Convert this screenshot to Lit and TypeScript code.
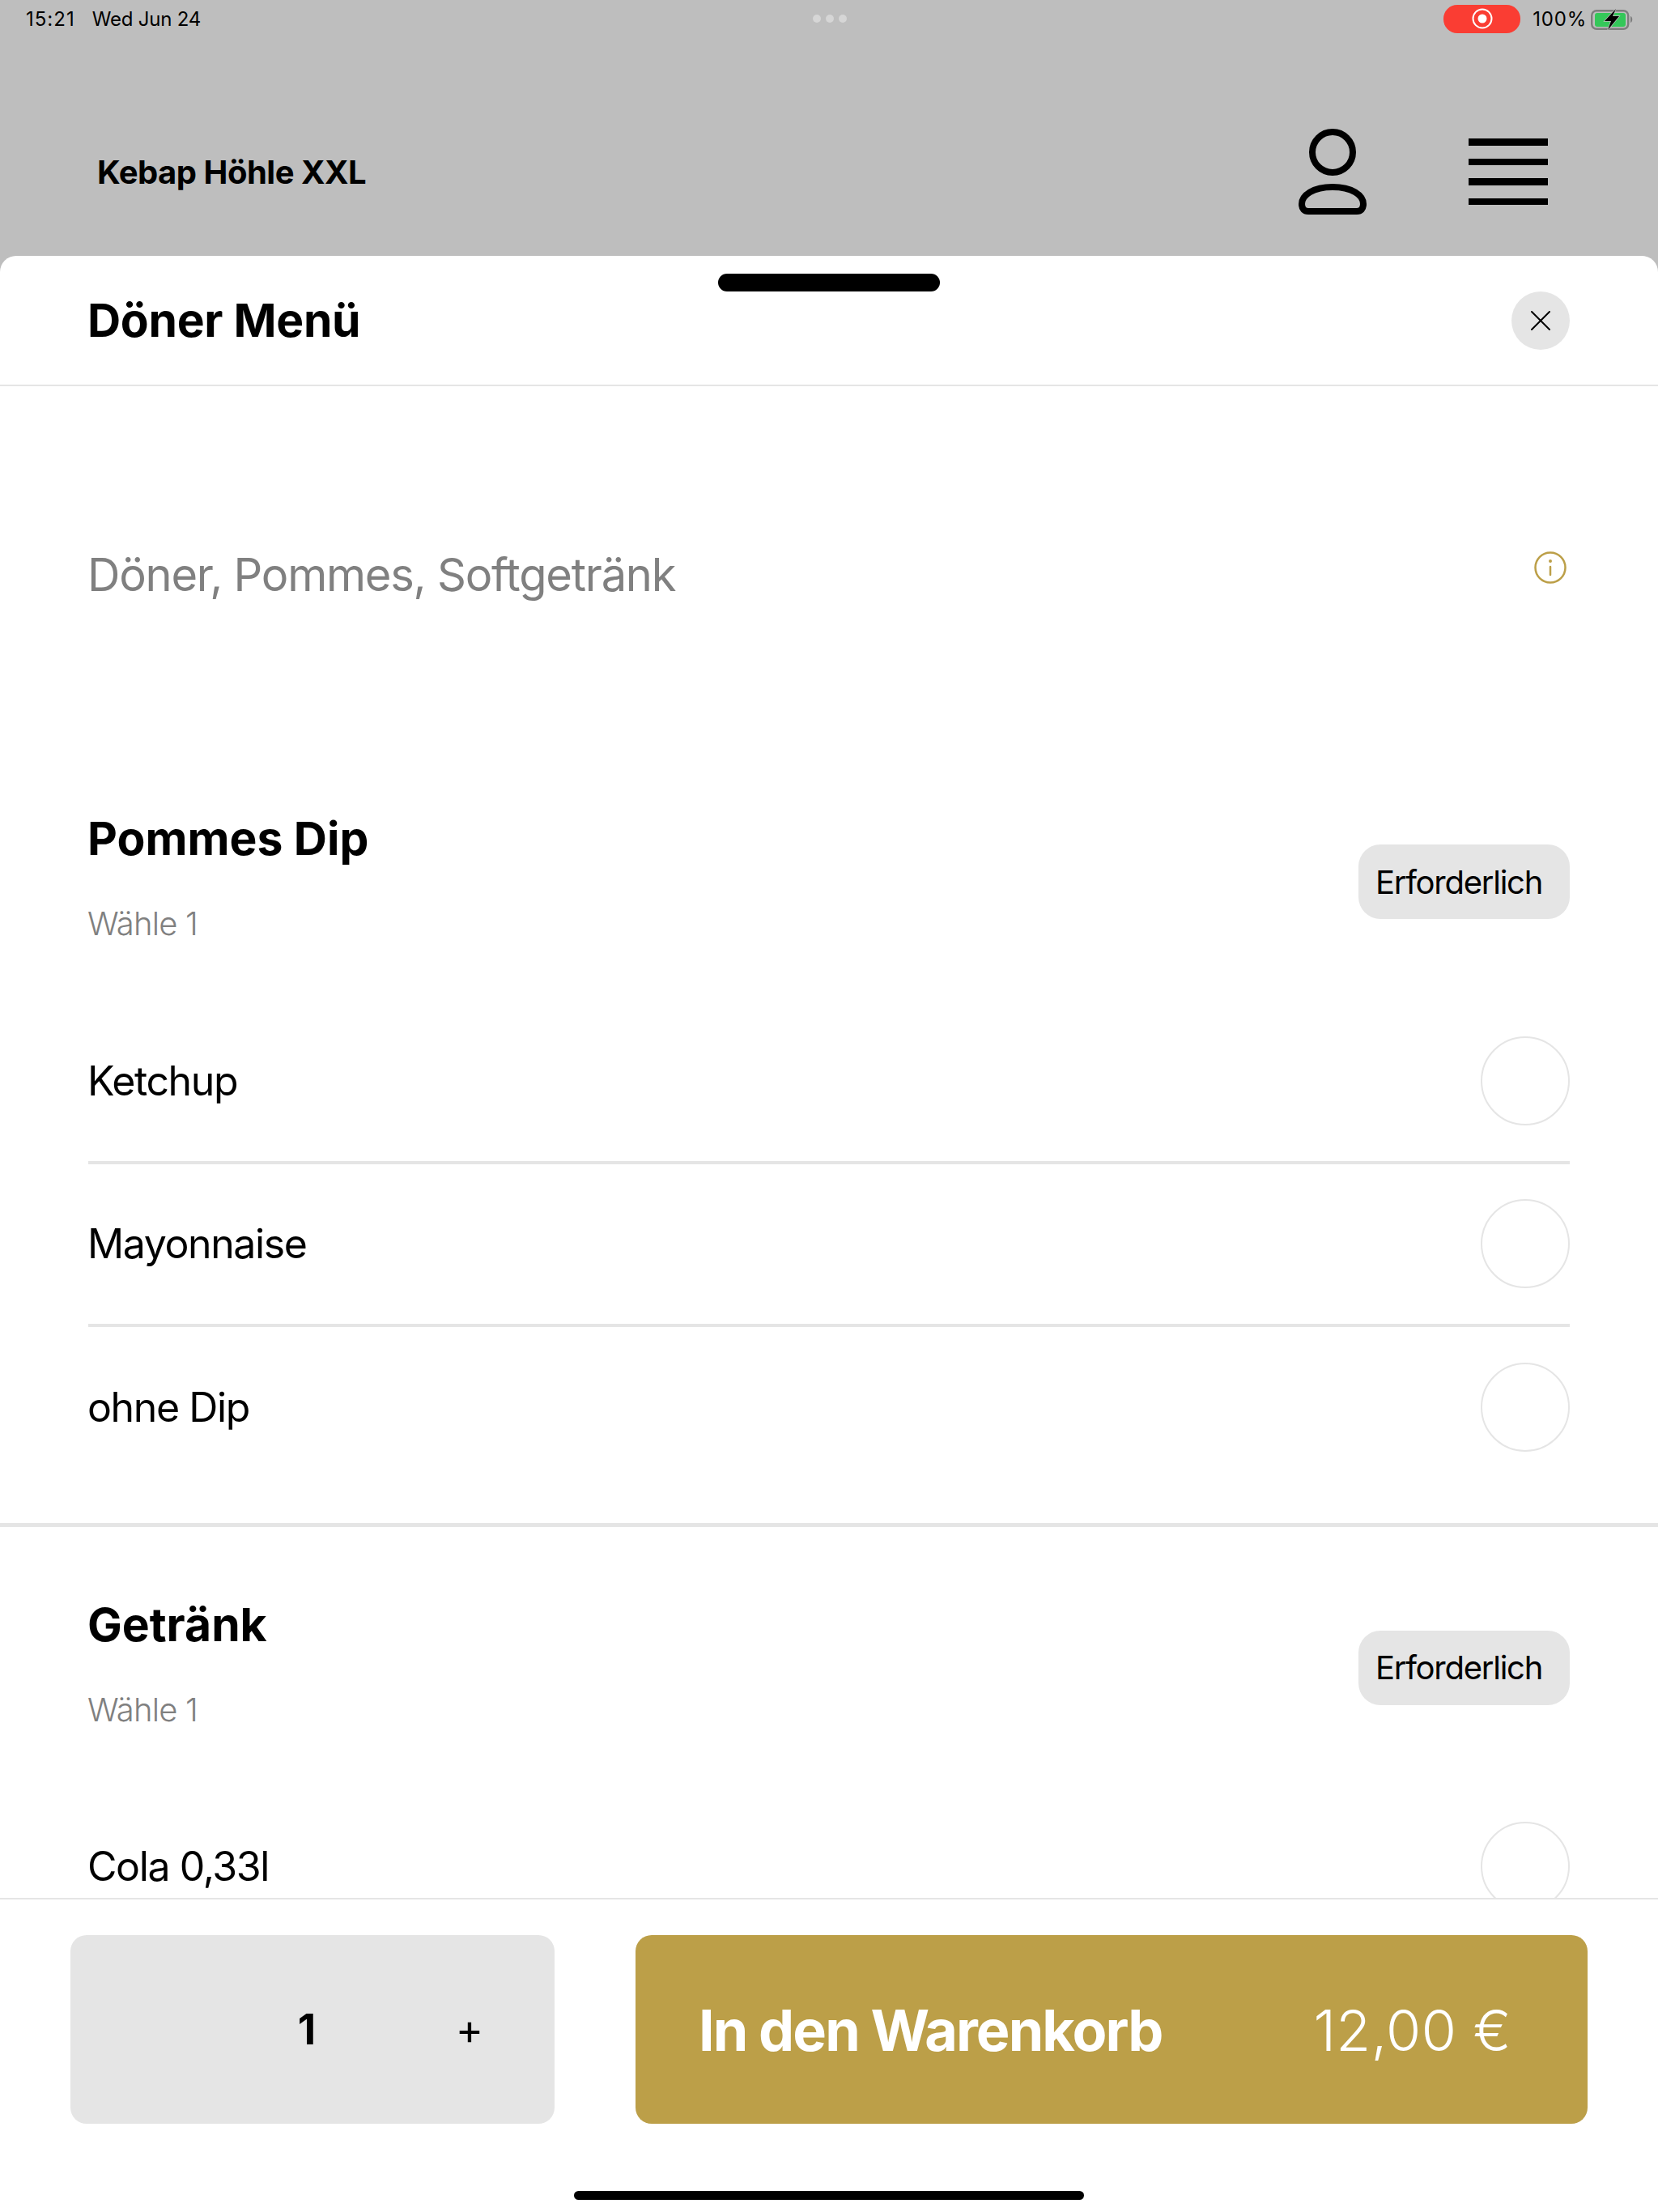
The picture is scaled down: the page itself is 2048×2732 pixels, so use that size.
import { LitElement, html, css, svg } from "lit";
import { customElement, property, state } from "lit/decorators.js";

interface Group {
  title: string;
  hint: string;
  options: string[];
}

const GROUPS: Group[] = [
  { title: "Pommes Dip", hint: "Wähle 1", options: ["Ketchup", "Mayonnaise", "ohne Dip"] },
  { title: "Getränk", hint: "Wähle 1", options: ["Cola 0,33l"] },
];

const personIcon = svg`<circle cx="42" cy="29" r="25" fill="none" stroke="#000" stroke-width="8"/>
  <path d="M42 72C66 72 80 82 80 93C80 99 77 102 72 102H12C7 102 4 99 4 93C4 82 18 72 42 72Z" fill="none" stroke="#000" stroke-width="8"/>`;

const boltIcon = svg`<path d="M31 6L17 21H25L21 32L35 15H27Z" fill="#000" stroke="#bebebe" stroke-width="1.5" paint-order="stroke"/>`;

@customElement("option-group")
export class OptionGroup extends LitElement {
  @property({ type: Object }) group!: Group;

  static styles = css`
    :host {
      display: block;
      padding: 0 109px 44px;
      border-bottom: 5px solid #e5e5e5;
    }
    .head {
      display: flex;
      justify-content: space-between;
      align-items: flex-start;
      box-sizing: border-box;
      height: 321px;
      padding-top: 88px;
    }
    h2 {
      margin: -1px 0 1px -1px;
      font-size: 57px;
      line-height: 68px;
      font-weight: 700;
      letter-spacing: 0;
      color: #000;
    }
    .hint {
      margin: 47px 0 0 -1px;
      font-size: 40px;
      line-height: 48px;
      font-weight: 300;
      letter-spacing: -0.8px;
      color: #808080;
    }
    .pill {
      display: flex;
      align-items: center;
      box-sizing: border-box;
      width: 261px;
      height: 92px;
      margin-top: 40px;
      padding-left: 21px;
      border-radius: 27px;
      background: #e5e5e5;
      font-size: 40px;
      letter-spacing: -1.25px;
      color: #000;
    }
    .row {
      display: flex;
      justify-content: space-between;
      align-items: center;
      height: 197.5px;
      border-bottom: 4.5px solid #e5e5e5;
      font-size: 50px;
      letter-spacing: -1.4px;
      color: #000;
    }
    .row:last-child {
      border-bottom: none;
    }
    .row span:first-child {
      margin-left: -1px;
    }
    .radio {
      box-sizing: border-box;
      width: 110px;
      height: 110px;
      border: 2px solid #e5e5e5;
      border-radius: 50%;
    }
  `;

  render() {
    return html`
      <div class="head">
        <div>
          <h2>${this.group.title}</h2>
          <div class="hint">${this.group.hint}</div>
        </div>
        <div class="pill">Erforderlich</div>
      </div>
      ${this.group.options.map(
        (name) => html`<div class="row">
          <span>${name}</span>
          <span class="radio"></span>
        </div>`,
      )}
    `;
  }
}

@customElement("app-root")
export class AppRoot extends LitElement {
  @state() protected quantity = 1;

  static styles = css`
    :host {
      display: flex;
      flex-direction: column;
      position: relative;
      width: 2048px;
      height: 2732px;
      overflow: hidden;
      background: #bebebe;
      font-family: Inter, "Liberation Sans", sans-serif;
      color: #000;
    }

    .status {
      display: flex;
      align-items: center;
      justify-content: space-between;
      height: 46px;
      padding: 0 30px 0 32px;
      font-size: 24px;
      letter-spacing: -0.2px;
    }
    .status-left {
      display: flex;
      gap: 21px;
      width: 400px;
    }
    .time {
      letter-spacing: 1px;
    }
    .dots {
      display: flex;
      gap: 6px;
    }
    .dots i {
      width: 10px;
      height: 10px;
      border-radius: 50%;
      background: #d6d6d6;
    }
    .status-right {
      display: flex;
      align-items: center;
      justify-content: flex-end;
      width: 400px;
    }
    .rec {
      display: flex;
      align-items: center;
      justify-content: center;
      width: 95px;
      height: 35px;
      margin-right: 15px;
      border-radius: 17px;
      background: #fa3d33;
    }
    .charge {
      letter-spacing: 0.8px;
    }
    .battery {
      margin-left: 5px;
    }

    .topbar {
      display: flex;
      align-items: center;
      height: 270px;
      padding: 62px 136px 0 120px;
      box-sizing: border-box;
    }
    .brand {
      flex: 1;
      font-size: 40px;
      font-weight: 700;
      letter-spacing: -0.5px;
    }
    .person {
      display: block;
      margin-right: 126px;
    }
    .burger {
      display: flex;
      flex-direction: column;
      gap: 16px;
      width: 98px;
    }
    .burger i {
      height: 8.5px;
      background: #000;
    }

    .sheet {
      flex: 1;
      display: flex;
      flex-direction: column;
      min-height: 0;
      border-radius: 20px 20px 0 0;
      background: #fff;
    }
    .grabber {
      position: absolute;
      left: 887px;
      top: 338px;
      width: 274px;
      height: 22px;
      border-radius: 11px;
      background: #000;
    }
    .sheet-head {
      display: flex;
      align-items: center;
      justify-content: space-between;
      height: 159px;
      padding: 0 109px;
      border-bottom: 2px solid #e5e5e5;
    }
    h1 {
      margin: -1px 0 0 -1px;
      font-size: 57px;
      font-weight: 700;
      letter-spacing: -0.3px;
    }
    .close {
      display: flex;
      align-items: center;
      justify-content: center;
      width: 72px;
      height: 72px;
      border-radius: 50%;
      background: #e5e5e5;
    }

    .scroll {
      flex: 1;
      min-height: 0;
      overflow: hidden;
    }
    .intro {
      display: flex;
      justify-content: space-between;
      align-items: center;
      box-sizing: border-box;
      height: 438px;
      padding: 28px 113px 0 108px;
      font-size: 56px;
      font-weight: 400;
      letter-spacing: -1.23px;
      color: #808080;
    }
    .intro svg {
      margin-top: -18px;
    }

    .footer {
      display: flex;
      justify-content: space-between;
      height: 388px;
      padding: 44px 87px 0;
      box-sizing: border-box;
      border-top: 2px solid #e5e5e5;
    }
    .qty {
      display: grid;
      grid-template-columns: 200px 184px 1fr;
      align-items: center;
      justify-items: center;
      width: 598px;
      height: 233px;
      border-radius: 20px;
      background: #e5e5e5;
    }
    .qty b {
      grid-column: 2;
      font-size: 52px;
      font-weight: 700;
    }
    .plus {
      grid-column: 3;
      width: 100%;
      padding-left: 4px;
      box-sizing: border-box;
      text-align: center;
      font-size: 52px;
      font-weight: 400;
    }
    .add {
      display: flex;
      align-items: center;
      justify-content: space-between;
      width: 1176px;
      height: 233px;
      padding: 2px 94px 0 78px;
      box-sizing: border-box;
      border-radius: 20px;
      background: #bc9f48;
      color: #fff;
      font-size: 70px;
    }
    .add b {
      font-weight: 700;
      letter-spacing: -1.9px;
    }
    .add span {
      font-weight: 300;
      letter-spacing: 0.4px;
    }
    .home {
      position: absolute;
      left: 709px;
      top: 2706px;
      width: 630px;
      height: 11px;
      border-radius: 6px;
      background: #000;
    }
  `;

  render() {
    return html`
      <div class="status">
        <div class="status-left"><span class="time">15:21</span><span>Wed Jun 24</span></div>
        <div class="dots"><i></i><i></i><i></i></div>
        <div class="status-right">
          <div class="rec">
            <svg width="26" height="26" viewBox="0 0 26 26">
              <circle cx="13" cy="13" r="11.5" fill="none" stroke="#fff" stroke-width="2"/>
              <circle cx="13" cy="13" r="5.5" fill="#fff"/>
            </svg>
          </div>
          <span class="charge">100%</span>
          <svg class="battery" width="53" height="36" viewBox="0 0 53 36">
            <rect x="1.2" y="8.2" width="45" height="22.6" rx="6" fill="none" stroke="#7d7d7d" stroke-width="2.4"/>
            <rect x="5" y="11" width="38" height="17" rx="3" fill="#34c759"/>
            <path d="M49 15C52 16 52 22 49 23Z" fill="#7d7d7d"/>
            ${boltIcon}
          </svg>
        </div>
      </div>

      <div class="topbar">
        <div class="brand">Kebap Höhle XXL</div>
        <svg class="person" width="84" height="106" viewBox="0 0 84 106">${personIcon}</svg>
        <div class="burger"><i></i><i></i><i></i><i></i></div>
      </div>

      <div class="sheet">
        <div class="sheet-head">
          <h1>Döner Menü</h1>
          <div class="close">
            <svg width="26" height="26" viewBox="0 0 26 26">
              <path d="M2 2L24 24M24 2L2 24" stroke="#000" stroke-width="2" stroke-linecap="round"/>
            </svg>
          </div>
        </div>

        <div class="scroll">
          <div class="intro">
            <span>Döner, Pommes, Softgetränk</span>
            <svg width="40" height="40" viewBox="0 0 40 40">
              <circle cx="20" cy="20" r="18.5" fill="none" stroke="#bc9f48" stroke-width="2.5"/>
              <circle cx="20" cy="12" r="2" fill="#bc9f48"/>
              <path d="M20 19V29" stroke="#bc9f48" stroke-width="2.5" stroke-linecap="round"/>
            </svg>
          </div>
          ${GROUPS.map((g) => html`<option-group .group=${g}></option-group>`)}
        </div>

        <div class="footer">
          <div class="qty">
            <b>${this.quantity}</b>
            <span class="plus">+</span>
          </div>
          <div class="add"><b>In den Warenkorb</b><span>12,00 €</span></div>
        </div>
      </div>

      <div class="grabber"></div>
      <div class="home"></div>
    `;
  }
}
